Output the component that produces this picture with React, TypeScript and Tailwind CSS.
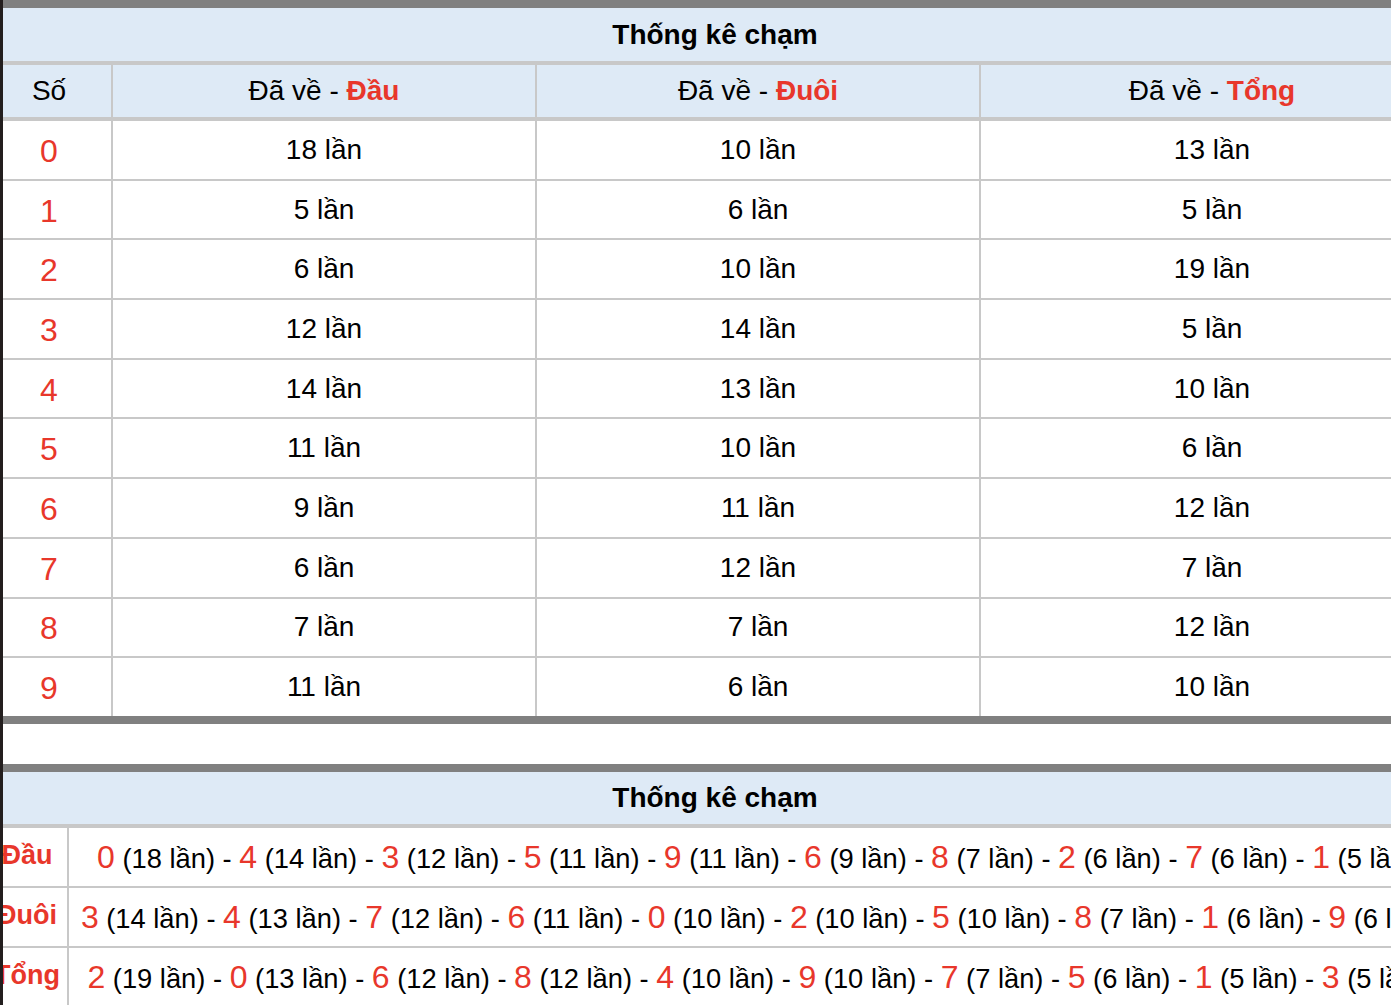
import React from 'react';

const dau = ['18', '5', '6', '12', '14', '11', '9', '6', '7', '11'];
const duoi = ['10', '6', '10', '14', '13', '10', '11', '12', '7', '6'];
const tong = ['13', '5', '19', '5', '10', '6', '12', '7', '12', '10'];

// sort digits by count, highest first (stable on ties)
const ranked = (counts: string[]) =>
  counts
    .map((c, i) => ({ digit: i, count: Number(c) }))
    .sort((a, b) => b.count - a.count);

const summary = [
  { label: 'Đầu', items: ranked(dau) },
  { label: 'Đuôi', items: ranked(duoi) },
  { label: 'Tổng', items: ranked(tong) },
];

function HeadLabel({ part }: { part: string }) {
  return (
    <span>
      Đã về - <span className="font-bold text-[#e8372b]">{part}</span>
    </span>
  );
}

export default function App() {
  return (
    <div className="flex min-h-screen bg-white font-['Liberation_Sans',Arial,sans-serif] text-black">
      {/* left edge */}
      <div className="w-[3px] shrink-0 bg-[#231e1e]" />

      <div className="flex-1 overflow-hidden">
        <div className="ml-[-16px] w-[1456px]">
          {/* Table 1 */}
          <div className="border-t-8 border-b-8 border-[#808080]">
            <div className="flex h-[57px] items-center justify-center border-b-4 border-[#c8c8c8] bg-[#deeaf6] pt-px text-[28px] font-bold">
              Thống kê chạm
            </div>
            <div className="grid h-[56px] grid-cols-[124px_424px_444px_464px] border-b-4 border-[#c8c8c8] bg-[#deeaf6] text-[28px]">
              <div className="flex items-center justify-center">Số</div>
              <div className="flex items-center justify-center border-l-2 border-[#c8c8c8]">
                <HeadLabel part="Đầu" />
              </div>
              <div className="flex items-center justify-center border-l-2 border-[#c8c8c8]">
                <HeadLabel part="Đuôi" />
              </div>
              <div className="flex items-center justify-center border-l-2 border-[#c8c8c8]">
                <HeadLabel part="Tổng" />
              </div>
            </div>
            {dau.map((d, i) => (
              <div
                key={i}
                className={`grid grid-cols-[124px_424px_444px_464px] text-[28px] ${
                  i < 9 ? 'h-[59.7px] border-b-2 border-[#c8c8c8]' : 'h-[57.7px]'
                }`}
              >
                <div className="flex items-center justify-center pt-[2px] text-[32px] text-[#e8372b]">{i}</div>
                <div className="flex items-center justify-center border-l-2 border-[#c8c8c8]">{d} lần</div>
                <div className="flex items-center justify-center border-l-2 border-[#c8c8c8]">{duoi[i]} lần</div>
                <div className="flex items-center justify-center border-l-2 border-[#c8c8c8]">{tong[i]} lần</div>
              </div>
            ))}
          </div>

          <div className="h-[40px]" />

          {/* Table 2 */}
          <div className="border-t-8 border-[#808080]">
            <div className="flex h-[56px] items-center justify-center border-b-4 border-[#c8c8c8] bg-[#deeaf6] text-[28px] font-bold">
              Thống kê chạm
            </div>
            {summary.map((row) => (
              <div
                key={row.label}
                className="grid h-[60px] grid-cols-[80px_1376px] border-b-2 border-[#c8c8c8]"
              >
                <div className="flex items-center justify-center whitespace-nowrap pb-[4px] text-[27px] font-bold text-[#e8372b]">
                  {row.label}
                </div>
                <div className="flex items-center justify-center whitespace-nowrap border-l-2 border-[#c8c8c8] text-[27.3px]">
                  <span>
                    {row.items.map((it, k) => (
                      <React.Fragment key={it.digit}>
                        <span className="text-[32px] text-[#e8372b]">{it.digit}</span>
                        {` (${it.count} lần)`}
                        {k < row.items.length - 1 ? ' - ' : ''}
                      </React.Fragment>
                    ))}
                  </span>
                </div>
              </div>
            ))}
          </div>
        </div>
      </div>
    </div>
  );
}
